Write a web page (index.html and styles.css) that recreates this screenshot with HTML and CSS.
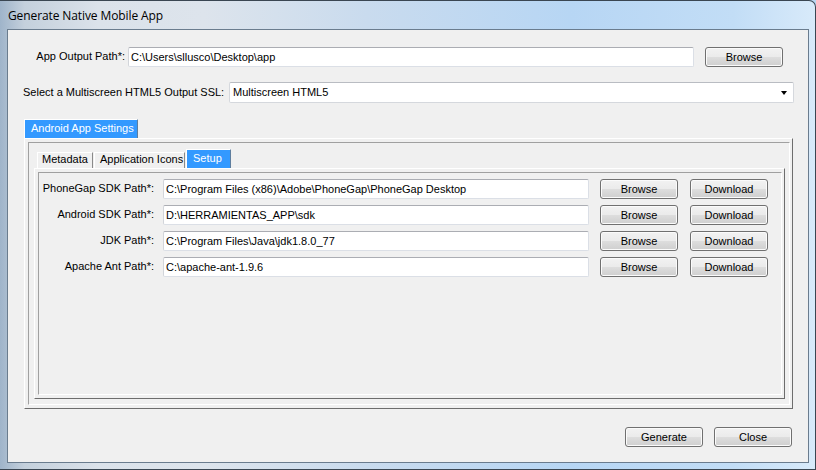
FILE: index.html
```html
<!DOCTYPE html>
<html lang="en">
<head>
    <meta charset="UTF-8">
    <title>Generate Native Mobile App</title>
    <link rel="stylesheet" href="styles.css">
</head>
<body>
    <div class="window">
        <div class="titlebar">Generate Native Mobile App</div>
        <div class="client">
            <div class="row row-output">
                <label class="lbl lbl-output">App Output Path*:</label>
                <input type="text" class="textbox tb-output" value="C:\Users\sllusco\Desktop\app">
                <button class="btn btn-top">Browse</button>
            </div>
            <div class="row row-ssl">
                <label class="lbl lbl-ssl">Select a Multiscreen HTML5 Output SSL:</label>
                <div class="combo">
                    <span class="combo-text">Multiscreen HTML5</span>
                    <span class="combo-arrow"></span>
                </div>
            </div>

            <div class="tabs outer-tabs">
                <div class="tab-strip">
                    <div class="tab active tab-android">Android App Settings</div>
                </div>
                <div class="tab-page">
                    <div class="tab-page-inner">
                        <div class="tabs inner-tabs">
                            <div class="tab-strip">
                                <div class="tab tab-meta">Metadata</div>
                                <div class="tab tab-icons">Application Icons</div>
                                <div class="tab active tab-setup">Setup</div>
                            </div>
                            <div class="tab-page">
                                <div class="tab-page-inner setup">
                                    <div class="setup-row">
                                        <label class="lbl lbl-setup">PhoneGap SDK Path*:</label>
                                        <input type="text" class="textbox tb-setup" value="C:\Program Files (x86)\Adobe\PhoneGap\PhoneGap Desktop">
                                        <button class="btn btn-browse">Browse</button>
                                        <button class="btn btn-download">Download</button>
                                    </div>
                                    <div class="setup-row">
                                        <label class="lbl lbl-setup">Android SDK Path*:</label>
                                        <input type="text" class="textbox tb-setup" value="D:\HERRAMIENTAS_APP\sdk">
                                        <button class="btn btn-browse">Browse</button>
                                        <button class="btn btn-download">Download</button>
                                    </div>
                                    <div class="setup-row">
                                        <label class="lbl lbl-setup">JDK Path*:</label>
                                        <input type="text" class="textbox tb-setup" value="C:\Program Files\Java\jdk1.8.0_77">
                                        <button class="btn btn-browse">Browse</button>
                                        <button class="btn btn-download">Download</button>
                                    </div>
                                    <div class="setup-row">
                                        <label class="lbl lbl-setup">Apache Ant Path*:</label>
                                        <input type="text" class="textbox tb-setup" value="C:\apache-ant-1.9.6">
                                        <button class="btn btn-browse">Browse</button>
                                        <button class="btn btn-download">Download</button>
                                    </div>
                                </div>
                            </div>
                        </div>
                    </div>
                </div>
            </div>

            <div class="actions">
                <button class="btn btn-action">Generate</button>
                <button class="btn btn-action">Close</button>
            </div>
        </div>
    </div>
</body>
</html>
```

FILE: styles.css
```css
body {
    margin: 0;
    padding: 0;
    font-family: "Liberation Sans", Arial, sans-serif;
    font-size: 11px;
    color: #000;
    background-color: #b9d7f3;
}

/* window frame (aero glass look) */
.window {
    width: 816px;
    height: 470px;
    box-sizing: border-box;
    padding: 0 6px 6px 7px;
    display: flex;
    flex-direction: column;
    border-top: 1px solid #3a4652;
    border-right: 1px solid #3a4652;
    border-bottom: 1px solid #3a4652;
    border-radius: 0 7px 0 0;
    background: linear-gradient(90deg, #9fb4ca 0%, #c4d0dc 3%, #dbe2ea 12%, #dde4ec 25%, #c9dbee 45%, #b7d6f4 70%, #c2ddf6 90%, #d8eafa 100%);
}
.titlebar {
    height: 27px;
    display: flex;
    align-items: center;
    padding-left: 1px;
    padding-top: 1px;
    font-family: "Open Sans", "Noto Sans", sans-serif;
    font-size: 12px;
    letter-spacing: -0.1px;
    color: #000;
}
.client {
    flex: 1;
    display: flex;
    flex-direction: column;
    background-color: #f0f0f0;
    border: 1px solid #6a7c8e;
}

/* controls */
.textbox {
    flex: none;
    height: 20px;
    box-sizing: border-box;
    padding: 0 2px 1px 2px;
    margin: 0;
    font-family: inherit;
    font-size: 11px;
    color: #000;
    background-color: #fff;
    border: 1px solid #dbdfe6;
    border-top-color: #abadb3;
    border-left-color: #d2d5da;
    border-radius: 2px;
    outline: none;
}
.btn {
    flex: none;
    width: 78px;
    height: 20px;
    box-sizing: border-box;
    padding: 0 0 1px 0;
    margin: 0;
    font-family: inherit;
    font-size: 11px;
    color: #000;
    border: 1px solid #707070;
    border-radius: 3px;
    background: linear-gradient(#f2f2f2 0%, #ebebeb 48%, #dddddd 52%, #cfcfcf 100%);
    box-shadow: inset 0 0 0 1px #fbfbfb;
}
.lbl {
    flex: none;
    margin-bottom: 2px;
}

/* top rows */
.row {
    display: flex;
    align-items: center;
}
.row-output {
    margin-top: 17px;
}
.lbl-output {
    width: 117px;
    text-align: right;
}
.tb-output {
    margin-left: 3px;
    width: 566px;
}
.btn-top {
    margin-left: 11px;
}
.row-ssl {
    margin-top: 15px;
}
.lbl-ssl {
    margin-left: 15px;
    width: 206px;
}
.combo {
    flex: 1;
    margin-right: 14px;
    height: 21px;
    box-sizing: border-box;
    display: flex;
    align-items: center;
    justify-content: space-between;
    padding: 0 6px 1px 3px;
    background-color: #fff;
    border: 1px solid #d5d8dd;
    border-top-color: #b9bcc2;
    border-radius: 2px;
}
.combo-arrow {
    width: 0;
    height: 0;
    margin-top: 1px;
    border-left: 3.5px solid transparent;
    border-right: 3.5px solid transparent;
    border-top: 4px solid #000;
}

/* tab controls */
.tabs {
    display: flex;
    flex-direction: column;
}
.outer-tabs {
    flex: 1;
    margin: 16px 15px 0 16px;
}
.tab-strip {
    height: 19px;
    display: flex;
    align-items: flex-end;
}
.tab {
    height: 16px;
    box-sizing: border-box;
    display: flex;
    align-items: center;
    padding-bottom: 3px;
    border-top: 1px solid #fff;
    border-left: 1px solid #fff;
    border-right: 1px solid #8a8a8a;
    background-color: #f0f0f0;
}
.tab.active {
    height: 19px;
    padding-bottom: 3px;
    color: #fff;
    background-color: #3399ff;
    border-right-color: #5e7e9e;
}
.tab-android {
    width: 114px;
    padding-left: 6px;
}
.tab-page {
    flex: 1;
    display: flex;
    box-sizing: border-box;
    padding: 3px 2px 3px 3px;
    border: 1px solid;
    border-color: #fff #6d6d6d #6d6d6d #fff;
}
.tab-page-inner {
    flex: 1;
    display: flex;
    flex-direction: column;
    border: 1px solid;
    border-color: #a0a0a0 #fff #fff #a0a0a0;
}
.inner-tabs {
    flex: 1;
    margin: 6px 4px 5px 5px;
}
.inner-tabs .tab-strip {
    padding-left: 3px;
}
.tab-meta {
    width: 56px;
    padding-left: 4px;
}
.tab-icons {
    width: 91px;
    margin-left: 1px;
    padding-left: 5px;
}
.tab-setup {
    width: 45px;
    margin-left: 1px;
    padding-left: 6px;
}

/* setup page */
.setup {
    padding-top: 6px;
}
.setup-row {
    display: flex;
    align-items: center;
    margin-bottom: 6px;
}
.lbl-setup {
    width: 115px;
    text-align: right;
}
.tb-setup {
    margin-left: 9px;
    width: 426px;
}
.btn-browse {
    margin-left: 11px;
}
.btn-download {
    margin-left: 12px;
}

/* bottom buttons */
.actions {
    display: flex;
    justify-content: flex-end;
    gap: 11px;
    margin-top: 18px;
    padding: 0 16px 15px 0;
}
```
